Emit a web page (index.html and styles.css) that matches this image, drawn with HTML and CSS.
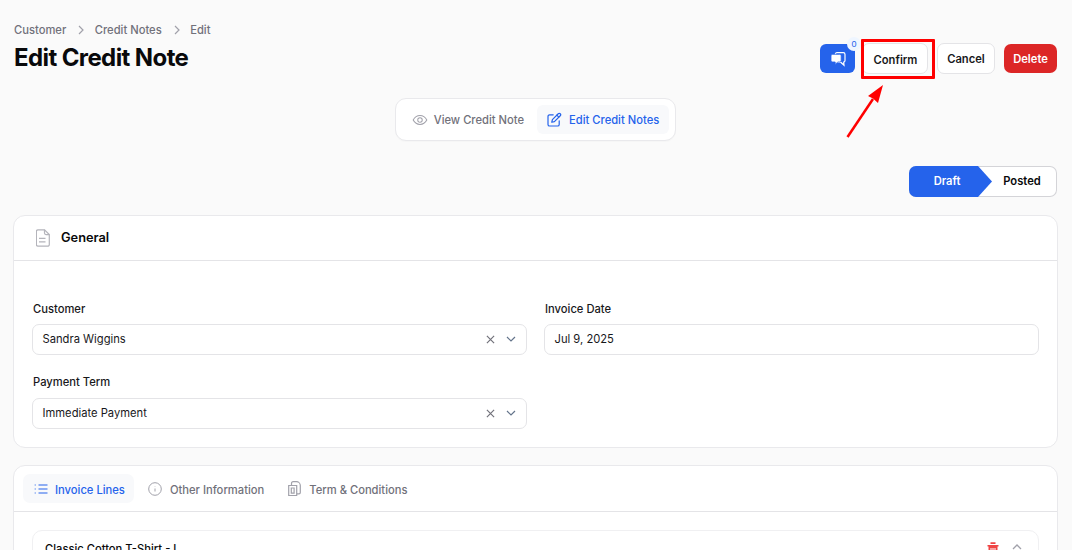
FILE: index.html
```html
<!DOCTYPE html>
<html lang="en">
<head>
<meta charset="utf-8">
<title>Edit Credit Note</title>
<link rel="stylesheet" href="styles.css">
</head>
<body>
<main class="page">
  <header class="head">
    <div class="head-left">
      <nav class="crumbs">
        <span>Customer</span>
        <svg class="crumb-sep" viewBox="0 0 8 10"><path d="M2 1l4 4-4 4"/></svg>
        <span>Credit Notes</span>
        <svg class="crumb-sep" viewBox="0 0 8 10"><path d="M2 1l4 4-4 4"/></svg>
        <span>Edit</span>
      </nav>
      <h1 class="title">Edit Credit Note</h1>
    </div>
    <div class="actions">
      <button class="btn-chat">
        <svg viewBox="0 0 16 16" width="16" height="16"><path class="chat-back" d="M7 1.700h6.300c1 0 1.700.7 1.700 1.700v6.200c0 .9-.5 1.500-1.300 1.600l.3 3-3.300-3H7c-1 0-1.700-.7-1.700-1.700V3.400C5.300 2.400 6 1.700 7 1.700z"/><path class="chat-front" d="M2.700 3.300h6.800c1 0 1.700.7 1.700 1.700v4.300c0 1-.7 1.700-1.700 1.700H7.700L5.200 13.500V11H2.700C1.700 11 1 10.300 1 9.300V5c0-1 .7-1.700 1.700-1.700z"/></svg>
        <span class="badge">0</span>
      </button>
      <button class="btn btn-light btn-confirm">Confirm</button>
      <button class="btn btn-light btn-cancel">Cancel</button>
      <button class="btn btn-red">Delete</button>
    </div>
  </header>

  <div class="switch-row">
    <div class="switcher">
      <a class="sw-item sw-view">
        <svg viewBox="0 0 20 20" width="16" height="16"><path d="M1.500 10S4.500 4.500 10 4.500 18.500 10 18.500 10 15.500 15.500 10 15.500 1.500 10 1.500 10z"/><circle cx="10" cy="10" r="2.800"/></svg>
        <span>View Credit Note</span>
      </a>
      <a class="sw-item sw-active">
        <svg viewBox="0 0 20 20" width="16" height="16"><path d="M9 3.500H4.500a2 2 0 0 0-2 2v10a2 2 0 0 0 2 2h10a2 2 0 0 0 2-2V11"/><path d="M15.300 2.200a1.700 1.700 0 0 1 2.500 2.500L10.500 12l-3.300.8.800-3.300z"/><path d="M13.500 4l2.500 2.500"/></svg>
        <span>Edit Credit Notes</span>
      </a>
    </div>
  </div>

  <div class="status-row">
    <div class="status">
      <span class="st-draft">Draft</span>
      <span class="st-posted">Posted</span>
    </div>
  </div>

  <section class="card">
    <div class="card-head">
      <svg class="doc-ico" viewBox="0 0 14 18" width="14" height="18"><path d="M2 .8h6.500l4.800 4.800V15.500a1.700 1.700 0 0 1-1.700 1.700H2A1.700 1.700 0 0 1 .4 15.500V2.500A1.700 1.700 0 0 1 2 .8z"/><path d="M8.500 .8v3.300a1.500 1.500 0 0 0 1.500 1.500h3.300"/><path d="M3 12.800h6.500M3 9.300h6.500"/></svg>
      <h2>General</h2>
    </div>
    <div class="form">
      <div class="field">
        <label>Customer</label>
        <div class="input">
          <span class="val">Sandra Wiggins</span>
          <svg class="x" viewBox="0 0 10 10" width="10" height="10"><path d="M1 1l8 8M9 1l-8 8"/></svg>
          <svg class="chev" viewBox="0 0 10 6" width="10" height="6"><path d="M1 1l4 4 4-4"/></svg>
        </div>
      </div>
      <div class="field">
        <label>Invoice Date</label>
        <div class="input"><span class="val">Jul 9, 2025</span></div>
      </div>
      <div class="field field-low">
        <label>Payment Term</label>
        <div class="input">
          <span class="val">Immediate Payment</span>
          <svg class="x" viewBox="0 0 10 10" width="10" height="10"><path d="M1 1l8 8M9 1l-8 8"/></svg>
          <svg class="chev" viewBox="0 0 10 6" width="10" height="6"><path d="M1 1l4 4 4-4"/></svg>
        </div>
      </div>
    </div>
  </section>

  <section class="card card-tabs">
    <div class="tabs">
      <a class="tab tab-active">
        <svg viewBox="0 0 14 12" width="14" height="12"><path d="M4.500 2h9M4.500 6h9M4.500 10h9M.7 2h1M.7 6h1M.7 10h1"/></svg>
        <span>Invoice Lines</span>
      </a>
      <a class="tab">
        <svg viewBox="0 0 14 14" width="14" height="14"><circle cx="7" cy="7" r="6.300"/><path d="M7 6.500v3M7 4.300v.4"/></svg>
        <span>Other Information</span>
      </a>
      <a class="tab tab-last">
        <svg viewBox="0 0 13 15" width="13" height="15"><path d="M.7 4.500h8v10h-8zM3.500 4.500V2.500c0-1 .6-1.800 1.700-1.800h3.300c2 0 3.800 1.800 3.800 3.800v7c0 .8-.6 1.300-1.300 1.300H8.700M3.300 7v5.200h2.800V7z"/></svg>
        <span>Term &amp; Conditions</span>
      </a>
    </div>
    <div class="tab-body">
      <div class="line-card">
        <span class="line-name">Classic Cotton T-Shirt - L</span>
        <svg class="trash" viewBox="0 0 12 13" width="12" height="13"><path d="M.5 3h11v1.500h-1V12a1 1 0 0 1-1 1h-7a1 1 0 0 1-1-1V4.500h-1zM3.500 .3h5V2h-5z"/><path class="trash-cut" d="M4 6v5M6 6v5M8 6v5"/></svg>
        <svg class="chev-up" viewBox="0 0 10 6" width="10" height="6"><path d="M1 5l4-4 4 4"/></svg>
      </div>
    </div>
  </section>
</main>

<div class="mark-box"></div>
<svg class="mark-arrow" viewBox="0 0 40 56" width="40" height="56"><path d="M1.500 54L27 16"/><polygon points="37,2 32,20 27,15.500 22,13"/></svg>
</body>
</html>
```
FILE: styles.css
```css
* { box-sizing: border-box; }
html, body { margin: 0; height: 550px; overflow: hidden; }
body {
  background: #fafafa;
  font-family: Inter, "Liberation Sans", sans-serif;
  color: #09090b;
  position: relative;
}
.page { padding: 0 15px 0 14px; }
.head { display: flex; justify-content: space-between; align-items: flex-start; height: 98px; padding-top: 23px; }
.crumbs { display: flex; align-items: center; height: 14px; font-size: 11.2px; font-weight: 500; line-height: 14px; color: #71717a; }
.crumb-sep { width: 8px; height: 10px; margin: 0 9.500px 0 11px; fill: none; stroke: #a1a1aa; stroke-width: 1.200; }
.title { margin: 7px 0 0; font-size: 24px; line-height: 28px; font-weight: 700; letter-spacing: -0.6px; }
.actions { display: flex; align-items: center; margin-top: 20px; }
.btn-chat { position: relative; width: 35px; height: 29px; background: #2563eb; border: 0; border-radius: 6px; padding: 0; margin-right: 7px; display: flex; align-items: center; justify-content: center; }
.chat-back { fill: none; stroke: #fff; stroke-width: 1.200; }
.chat-front { fill: #fff; stroke: #2563eb; stroke-width: .8; }
.badge { position: absolute; top: -7px; right: -6px; width: 14px; height: 14px; border-radius: 50%; background: #eff6ff; color: #2563eb; font-size: 9px; line-height: 14px; font-weight: 500; text-align: center; }
.btn { height: 30px; border-radius: 7px; font-family: inherit; font-size: 11.2px; font-weight: 600; padding: 0; line-height: 30px; }
.btn-light { background: #fff; border: 1px solid #e4e4e7; color: #18181b; }
.btn-confirm { width: 66px; margin-right: 9px; height: 31px; padding: 1px 0 0 1px; }
.btn-cancel { width: 58px; margin-right: 9px; height: 31px; }
.btn-red { width: 53px; height: 29px; background: #dc2626; border: 0; color: #fff; }
.switch-row { display: flex; justify-content: center; height: 68px; }
.switcher { display: flex; align-items: center; gap: 4px; height: 43px; padding: 0 6px; background: #fff; border: 1px solid #e9e9ec; border-radius: 11px; box-shadow: 0 1px 1px rgba(0,0,0,.02); }
.sw-item { display: flex; align-items: center; gap: 7px; height: 29px; padding: 0 9px; border-radius: 6px; font-size: 11.2px; font-weight: 500; color: #71717a; }
.sw-view { gap: 6px; padding-left: 10px; }
.sw-item svg { fill: none; stroke: #a1a1aa; stroke-width: 1.300; stroke-linecap: round; stroke-linejoin: round; }
.sw-active { background: #f8f9fb; color: #2563eb; padding-right: 10px; }
.sw-active svg { stroke: #2563eb; stroke-width: 1.500; }
.status-row { display: flex; justify-content: flex-end; height: 49px; }
.status { display: flex; width: 148px; height: 31px; background: #fff; box-shadow: inset 0 0 0 1px #d4d4d8; border-radius: 7px; overflow: hidden; font-size: 11.2px; font-weight: 600; }
.st-draft { width: 83px; flex: none; background: #2563eb; color: #fff; display: flex; align-items: center; justify-content: center; padding: 0 7px 1px 0; clip-path: polygon(0 0, 69px 0, 100% 50%, 69px 100%, 0 100%); }
.st-posted { flex: 1; display: flex; align-items: center; justify-content: center; padding: 0 5px 1px 0; color: #09090b; }
.card { background: #fff; border: 1px solid #e9e9ec; border-radius: 12px; margin: 0 -1px 0 -1px; }
.card-head { display: flex; align-items: center; height: 45px; padding: 0 0 1px 22px; gap: 11px; border-bottom: 1px solid #e4e4e7; }
.doc-ico { fill: none; stroke: #b4b4bb; stroke-width: 1.200; }
.card-head h2 { margin: 0; font-size: 12.800px; font-weight: 600; color: #09090b; }
.form { display: grid; grid-template-columns: 495px 495px; column-gap: 17px; row-gap: 20px; padding: 41px 18px 18px 18px; }
.field label { display: block; font-size: 11.2px; line-height: 14px; font-weight: 500; margin-bottom: 8px; padding-left: 1px; color: #18181b; }
.field-low label { margin-bottom: 9px; }
.input { display: flex; align-items: center; height: 31px; padding: 0 10px 1px 9.500px; background: #fff; border: 1px solid #e4e4e7; border-radius: 7px; font-size: 11.2px; color: #18181b; }
.val { flex: 1; }
.x { fill: none; stroke: #71717a; stroke-width: 1.300; margin-right: 11px; width: 9px; height: 9px; }
.chev { fill: none; stroke: #64748b; stroke-width: 1.200; }
.card-tabs { margin-top: 17px; height: 200px; }
.tabs { display: flex; align-items: center; gap: 3px; height: 46px; padding: 0 9px; border-bottom: 1px solid #e4e4e7; }
.tab { display: flex; align-items: center; gap: 7px; height: 29px; padding: 0 9px 0 11px; border-radius: 7px; font-size: 11.2px; font-weight: 500; color: #71717a; }
.tab span { padding-top: 2px; }
.tab + .tab { gap: 8px; }
.tab-last { padding-left: 12px; }
.tab svg { fill: none; stroke: #a1a1aa; stroke-width: 1; }
.tab-last svg { stroke-width: 1.200; }
.tab-active { background: #f8f9fb; color: #2563eb; }
.tab-active svg { stroke: #2563eb; stroke-width: 1.200; }
.tab-body { padding: 18px; }
.line-card { display: flex; height: 60px; padding: 11px 16px 0 12px; align-items: flex-start; border: 1px solid #f0f0f2; border-radius: 10px; }
.line-name { flex: 1; font-size: 11.2px; font-weight: 500; line-height: 14px; color: #09090b; }
.trash { fill: #ef4444; margin-right: 13px; }
.trash-cut { stroke: #fff; fill: none; stroke-width: 1; }
.chev-up { fill: none; stroke: #a1a1aa; stroke-width: 1.300; margin-top: 2px; }
.mark-box { position: absolute; left: 861px; top: 39px; width: 74px; height: 40px; border: 3px solid #f00; border-radius: 1px; }
.mark-arrow { position: absolute; left: 846px; top: 83px; }
.mark-arrow path { stroke: #f00; stroke-width: 2.500; fill: none; }
.mark-arrow polygon { fill: #f00; }
```
